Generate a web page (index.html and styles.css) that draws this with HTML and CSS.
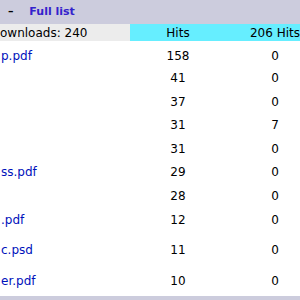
FILE: index.html
```html
<!DOCTYPE html>
<html lang="en">
<head>
    <meta charset="UTF-8">
    <title>Downloads - Full list</title>
    <link rel="stylesheet" href="styles.css">
</head>
<body>
    <div class="frame">
        <div class="title">
            <span class="dash">&ndash;</span>
            <a href="#">Full list</a>
        </div>
        <table class="data">
            <thead>
                <tr>
                    <th class="name">ownloads: 240</th>
                    <th class="hits">Hits</th>
                    <th class="hits">206 Hits</th>
                </tr>
            </thead>
            <tbody>
                <tr class="first"><td class="name"><a href="#">p.pdf</a></td><td>158</td><td>0</td></tr>
                <tr><td class="name"></td><td>41</td><td>0</td></tr>
                <tr><td class="name"></td><td>37</td><td>0</td></tr>
                <tr><td class="name"></td><td>31</td><td>7</td></tr>
                <tr><td class="name"></td><td>31</td><td>0</td></tr>
                <tr><td class="name"><a href="#">ss.pdf</a></td><td>29</td><td>0</td></tr>
                <tr><td class="name"></td><td>28</td><td>0</td></tr>
                <tr class="mid"><td class="name"><a href="#">.pdf</a></td><td>12</td><td>0</td></tr>
                <tr class="tall"><td class="name"><a href="#">c.psd</a></td><td>11</td><td>0</td></tr>
                <tr class="tall"><td class="name"><a href="#">er.pdf</a></td><td>10</td><td>0</td></tr>
            </tbody>
        </table>
    </div>
</body>
</html>
```

FILE: styles.css
```css
body {
    margin: 0;
    overflow: hidden;
    font-family: "DejaVu Sans", Verdana, sans-serif;
    font-size: 12px;
    color: #000;
    background-color: #fff;
}
.frame {
    width: 324px;
    background-color: #ccccdd;
    padding-bottom: 10px;
}
.title {
    height: 24px;
    line-height: 24px;
    padding-left: 8px;
    font-size: 11px;
    font-weight: bold;
}
.title .dash {
    margin-right: 12px;
}
.title a {
    color: #3322cc;
    text-decoration: none;
}
.data {
    width: 324px;
    border-collapse: collapse;
    table-layout: fixed;
    background-color: #fff;
}
.data th {
    height: 17px;
    padding: 0;
    font-weight: normal;
    text-align: center;
}
.data th.name {
    width: 130px;
    background-color: #ececec;
}
.data th.hits {
    background-color: #66eeff;
}
.data th.hits:last-child {
    width: 98px;
}
.data td {
    height: 23.5px;
    padding: 0;
    text-align: center;
}
.data .name {
    text-align: left;
    white-space: nowrap;
    overflow: hidden;
}
.data td.name {
    padding-left: 1px;
}
.data td.name a {
    color: #0011bb;
    text-decoration: none;
}
.data tr.first td {
    height: 21.5px;
    padding-top: 4px;
}
.data tr.mid td {
    vertical-align: top;
    padding-top: 5px;
    height: 21.5px;
}
.data tr.tall td {
    height: 31px;
}
```
